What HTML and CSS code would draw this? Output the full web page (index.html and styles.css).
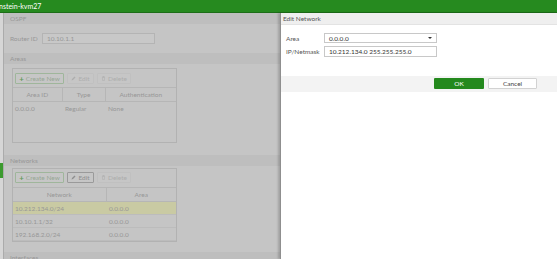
FILE: index.html
```html
<!DOCTYPE html>
<html lang="en">
<head>
    <meta charset="UTF-8">
    <meta name="viewport" content="width=device-width, initial-scale=1.0">
    <title>OSPF - Edit Network</title>
    <link rel="stylesheet" href="styles.css">
</head>
<body>
    <!-- Top bar -->
    <header class="topbar">
        <span class="hostname">nstein-kvm27</span>
    </header>

    <div class="layout">
        <nav class="sidebar">
            <div class="nav-mark"></div>
        </nav>

        <!-- OSPF page (behind the slide-out) -->
        <main class="content">
            <div class="section-title">OSPF</div>
            <div class="field-row">
                <label class="field-label">Router ID</label>
                <input class="text-input" type="text" value="10.10.1.1">
            </div>

            <div class="section-title">Areas</div>
            <div class="table-box areas-box">
                <div class="toolbar">
                    <button class="tool-btn create-btn"><span class="plus">+</span>Create New</button>
                    <button class="tool-btn edit-btn disabled">
                        <svg class="icon" viewBox="0 0 10 10"><path d="M1 9 L2 6 L7 1 L9 3 L4 8 Z" fill="currentColor"/></svg>Edit
                    </button>
                    <button class="tool-btn delete-btn disabled">
                        <svg class="icon" viewBox="0 0 10 10"><path d="M2 2 H8 M4 2 V1 H6 V2 M2.8 3 H7.2 L6.8 9 H3.2 Z" fill="none" stroke="currentColor" stroke-width="1"/></svg>Delete
                    </button>
                </div>
                <table class="grid">
                    <thead>
                        <tr>
                            <th class="col-area">Area ID</th>
                            <th class="col-type">Type</th>
                            <th>Authentication</th>
                        </tr>
                    </thead>
                    <tbody>
                        <tr>
                            <td>0.0.0.0</td>
                            <td>Regular</td>
                            <td>None</td>
                        </tr>
                    </tbody>
                </table>
            </div>

            <div class="section-title networks-title">Networks</div>
            <div class="table-box networks-box">
                <div class="toolbar">
                    <button class="tool-btn create-btn"><span class="plus">+</span>Create New</button>
                    <button class="tool-btn edit-btn enabled">
                        <svg class="icon" viewBox="0 0 10 10"><path d="M1 9 L2 6 L7 1 L9 3 L4 8 Z" fill="currentColor"/></svg>Edit
                    </button>
                    <button class="tool-btn delete-btn disabled">
                        <svg class="icon" viewBox="0 0 10 10"><path d="M2 2 H8 M4 2 V1 H6 V2 M2.8 3 H7.2 L6.8 9 H3.2 Z" fill="none" stroke="currentColor" stroke-width="1"/></svg>Delete
                    </button>
                </div>
                <table class="grid">
                    <thead>
                        <tr>
                            <th class="col-network">Network</th>
                            <th>Area</th>
                        </tr>
                    </thead>
                    <tbody>
                        <tr class="selected">
                            <td>10.212.134.0/24</td>
                            <td>0.0.0.0</td>
                        </tr>
                        <tr>
                            <td>10.10.1.1/32</td>
                            <td>0.0.0.0</td>
                        </tr>
                        <tr>
                            <td>192.168.2.0/24</td>
                            <td>0.0.0.0</td>
                        </tr>
                    </tbody>
                </table>
            </div>

            <div class="section-title interfaces-title">Interfaces</div>
        </main>

        <!-- Edit Network slide-out -->
        <aside class="slide-panel">
            <div class="panel-title">Edit Network</div>
            <div class="panel-body">
                <div class="panel-row">
                    <label class="panel-label">Area</label>
                    <div class="select-box">
                        <span>0.0.0.0</span>
                        <span class="caret"></span>
                    </div>
                </div>
                <div class="panel-row">
                    <label class="panel-label">IP/Netmask</label>
                    <input class="panel-input" type="text" value="10.212.134.0 255.255.255.0">
                </div>
            </div>
            <div class="panel-footer">
                <button class="btn-ok">OK</button>
                <button class="btn-cancel">Cancel</button>
            </div>
        </aside>
    </div>
</body>
</html>
```

FILE: styles.css
```css
* {
    box-sizing: border-box;
}

body {
    margin: 0;
    height: 259px;
    overflow: hidden;
    font-family: Lato, 'Liberation Sans', sans-serif;
    font-size: 6.5px;
    background-color: #c5c5c5;
}

/* Top bar */
.topbar {
    height: 13px;
    background-color: #268a1f;
    border-bottom: 1px solid #1d6e18;
    color: #ffffff;
    font-size: 7px;
    line-height: 12px;
    white-space: nowrap;
    overflow: hidden;
}

.hostname {
    margin-left: -1px;
}

.layout {
    display: flex;
    height: 246px;
}

.sidebar {
    width: 4px;
    flex-shrink: 0;
    background-color: #d6d6d6;
    border-right: 1px solid #ababab;
    padding-top: 150px;
}

.nav-mark {
    width: 3px;
    height: 15px;
    background-color: #3c9a2f;
}

/* Page behind the panel */
.content {
    flex: 1;
    overflow: hidden;
    background-color: #c5c5c5;
    color: #979797;
}

.section-title {
    height: 11px;
    line-height: 11px;
    padding-left: 6px;
    background-color: #bebebe;
}

.networks-title {
    margin-top: 12px;
}

.interfaces-title {
    margin-top: 10px;
}

.field-row {
    display: flex;
    align-items: center;
    padding: 9px 0 9px 6px;
}

.field-label {
    width: 32px;
}

.text-input {
    width: 113px;
    height: 11px;
    padding: 0 4px;
    border: 1px solid #b4b4b4;
    background-color: #c8c8c8;
    color: #979797;
    font: inherit;
}

.table-box {
    width: 165px;
    margin: 4px 0 0 8px;
    padding-top: 4px;
    border: 1px solid #b2b2b2;
}

.areas-box {
    height: 75px;
}

.networks-box {
    margin-top: 2px;
    padding-top: 3px;
}

.toolbar {
    display: flex;
    gap: 3px;
    padding-left: 2px;
    margin-bottom: 3px;
}

.networks-box .toolbar {
    margin-bottom: 4px;
}

.tool-btn {
    display: flex;
    align-items: center;
    justify-content: center;
    gap: 2px;
    height: 11px;
    padding: 0;
    border: 1px solid #bdbdbd;
    border-radius: 1px;
    background-color: #c6c6c6;
    color: #aaaaaa;
    font: inherit;
    white-space: nowrap;
}

.create-btn {
    width: 49px;
    border-color: #9fb69b;
    color: #97a695;
}

.edit-btn {
    width: 27px;
}

.delete-btn {
    width: 34px;
}

.plus {
    color: #5f9a57;
    font-size: 8px;
    font-weight: bold;
    line-height: 8px;
}

.tool-btn.disabled {
    border-color: #c0c0c0;
    color: #adadad;
}

.tool-btn.enabled {
    border-color: #9a9a9a;
    color: #8e8e8e;
}

.icon {
    width: 5px;
    height: 5px;
}

.grid {
    width: 100%;
    border-collapse: collapse;
}

.grid th {
    height: 14px;
    font-weight: normal;
    text-align: center;
    border-top: 1px solid #b6b6b6;
    border-bottom: 1px solid #b6b6b6;
    border-left: 1px solid #b6b6b6;
}

.grid th:first-child {
    border-left: none;
}

.grid td {
    height: 13px;
    padding-left: 2px;
    border-bottom: 1px solid #bcbcbc;
}

.areas-box .grid td {
    border-bottom: none;
}

.grid td + td {
    padding-left: 3px;
}

.col-area {
    width: 49px;
}

.col-type {
    width: 43px;
}

.col-network {
    width: 93px;
}

.grid tr.selected td {
    background-color: #c9caa3;
}

/* Slide-out panel */
.slide-panel {
    width: 277px;
    flex-shrink: 0;
    background-color: #ffffff;
    border-left: 1px solid #8f8f8f;
    box-shadow: -2px 0 2px rgba(0, 0, 0, 0.18);
    color: #555555;
}

.panel-title {
    height: 12px;
    line-height: 12px;
    padding-left: 2px;
    background-color: #efefef;
    border-bottom: 1px solid #e3e3e3;
}

.panel-body {
    padding: 8px 0 16px 5px;
}

.panel-row {
    display: flex;
    align-items: center;
    margin-bottom: 3px;
}

.panel-label {
    width: 38px;
}

.select-box,
.panel-input {
    width: 113px;
    height: 11px;
    padding: 0 4px;
    border: 1px solid #c8c8c8;
    background-color: #ffffff;
    color: #333333;
    font: inherit;
}

.select-box {
    display: flex;
    align-items: center;
    justify-content: space-between;
    height: 10px;
}

.caret {
    width: 0;
    height: 0;
    border-left: 2px solid transparent;
    border-right: 2px solid transparent;
    border-top: 2.5px solid #333333;
}

.panel-footer {
    display: flex;
    justify-content: flex-end;
    gap: 4px;
    height: 16px;
    padding: 2px 20px 0 0;
    background-color: #f3f3f3;
}

.btn-ok,
.btn-cancel {
    width: 50px;
    height: 11px;
    padding: 0;
    font: inherit;
    border-radius: 1px;
}

.btn-ok {
    background-color: #24891d;
    border: none;
    color: #ffffff;
}

.btn-cancel {
    width: 49px;
    background-color: #ffffff;
    border: 1px solid #d2d2d2;
    color: #444444;
}
```
